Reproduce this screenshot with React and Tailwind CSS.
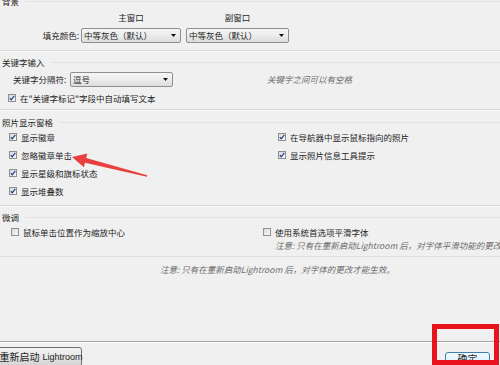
import React from 'react'

const Check = ({ checked }) => (
  <span className="w-[8px] h-[8px] shrink-0 border border-[#8e8f8f] bg-linear-to-br from-[#d9d9d9] to-[#fafafa] flex items-center justify-center">
    {checked && (
      <svg width="6" height="6" viewBox="0 0 6 6">
        <polyline points="0.8,3.2 2.3,4.8 5.3,0.9" fill="none" stroke="#2b4690" strokeWidth="1.3" />
      </svg>
    )}
  </span>
)

const CheckRow = ({ checked, label, className = "" }) => (
  <div className={`flex items-center gap-[4px] whitespace-nowrap ${className}`}>
    <Check checked={checked} />
    <span>{label}</span>
  </div>
)

const Select = ({ value, className = "" }) => (
  <div className={`h-[15px] border border-[#8f8f8f] rounded-[2px] bg-linear-to-b from-[#f6f6f6] via-[#ececec] to-[#dcdcdc] flex items-center justify-between pl-[2px] pr-[4px] ${className}`}>
    <span className="whitespace-nowrap">{value}</span>
    <svg width="5" height="3" viewBox="0 0 5 3">
      <polygon points="0,0 5,0 2.5,3" fill="#111" />
    </svg>
  </div>
)

const Title = ({ children, className = "" }) => (
  <div className={`flex items-center ${className}`}>
    <span className="pl-[2px] whitespace-nowrap">{children}</span>
    <div className="flex-1 ml-[6px] h-px bg-[#e3e3e3]" />
  </div>
)

const Sep = ({ className = "" }) => (
  <div className={`border-t border-[#d6d6d6] border-b border-b-[#fbfbfb] ${className}`} />
)

const Note = ({ children, className = "" }) => (
  <div className={`italic text-[#6d6d6d] whitespace-nowrap flex items-center ${className}`}>
    {children}
  </div>
)

export default function App() {
  return (
    <div className="w-[500px] h-[365px] overflow-hidden relative bg-[#f0f0f0] text-[#1f1f1f] text-[8.5px] leading-none font-['Noto_Sans_CJK_SC',sans-serif]">
      {/* 背景 */}
      <Title className="-mt-[5px] h-[12px]">背景</Title>
      <div className="h-[21px] flex items-center">
        <div className="w-[81px]" />
        <div className="w-[100px] text-center">主窗口</div>
        <div className="w-[103px] ml-[5px] text-center">副窗口</div>
      </div>
      <div className="h-[15px] flex items-center">
        <div className="w-[81px] text-right pr-[2px]">填充颜色:</div>
        <Select className="w-[100px]" value="中等灰色（默认）" />
        <Select className="w-[103px] ml-[5px]" value="中等灰色（默认）" />
      </div>
      <Sep className="mt-[7px]" />

      {/* 关键字输入 */}
      <Title className="h-[20px]">关键字输入</Title>
      <div className="h-[15px] flex items-center">
        <div className="w-[267px] flex items-center pl-[13px]">
          <span className="w-[57px]">关键字分隔符:</span>
          <Select className="w-[103px]" value="逗号" />
        </div>
        <Note>关键字之间可以有空格</Note>
      </div>
      <CheckRow className="mt-[3px] h-[16px] pl-[8px]" checked label={'在"关键字标记"字段中自动填写文本'} />
      <Sep className="mt-[3px]" />

      {/* 照片显示窗格 */}
      <Title className="mt-[5px] h-[12px]">照片显示窗格</Title>
      <div className="flex">
        <div className="w-[278px] pl-[9px]">
          <CheckRow className="h-[18px]" checked label="显示徽章" />
          <CheckRow className="h-[18px]" checked label="忽略徽章单击" />
          <CheckRow className="h-[18px]" checked label="显示星级和旗标状态" />
          <CheckRow className="h-[18px]" checked label="显示堆叠数" />
        </div>
        <div>
          <CheckRow className="h-[18px]" checked label="在导航器中显示鼠标指向的照片" />
          <CheckRow className="h-[18px]" checked label="显示照片信息工具提示" />
        </div>
      </div>
      <Sep className="mt-[5px]" />

      {/* 微调 */}
      <Title className="mt-[4px] h-[12px]">微调</Title>
      <div className="h-[18px] flex items-center">
        <CheckRow className="w-[263px] pl-[11px]" label="鼠标单击位置作为缩放中心" />
        <CheckRow label="使用系统首选项平滑字体" />
      </div>
      <Note className="h-[8px] pl-[275px]">注意: 只有在重新启动Lightroom 后，对字体平滑功能的更改才能生效。</Note>
      <div className="mt-[7px] h-px bg-[#dedede]" />
      <Note className="mt-[5px] h-[14px] pl-[160px]">注意: 只有在重新启动Lightroom 后，对字体的更改才能生效。</Note>

      {/* footer */}
      <div className="mt-[65px] border-t border-[#a3a3a3] border-b border-b-white" />
      <div className="flex items-start mt-[4px]">
        <button className="-ml-[8px] h-[20px] w-[90px] pl-[8px] border border-[#707070] rounded-[3px] bg-linear-to-b from-[#f3f3f3] via-[#e6e6e6] to-[#d2d2d2] flex items-center justify-center gap-[3px] whitespace-nowrap">
          <span className="text-[10px]">重新启动</span>
          <span className="text-[9px] font-['Liberation_Sans',sans-serif]">Lightroom</span>
        </button>
        <button className="ml-auto mr-[10px] mt-[5px] w-[45px] h-[18px] border border-[#3c7fb1] rounded-[3px] bg-linear-to-b from-[#f2f9fd] to-[#cfeafb] flex items-start justify-center pt-[1px] text-[10px]">
          确定
        </button>
      </div>

      {/* annotations */}
      <div className="absolute left-[432px] top-[324px] w-[67px] h-[41px] border-[5px] border-[#e8131b]" />
      <svg className="absolute left-0 top-0 pointer-events-none" width="500" height="365" viewBox="0 0 500 365">
        <polygon
          points="72,157 87.3,153.6 86.2,158 147.2,175.2 146.8,176.8 85,162.8 83.9,167.2"
          fill="#e8403f"
        />
      </svg>
    </div>
  )
}
